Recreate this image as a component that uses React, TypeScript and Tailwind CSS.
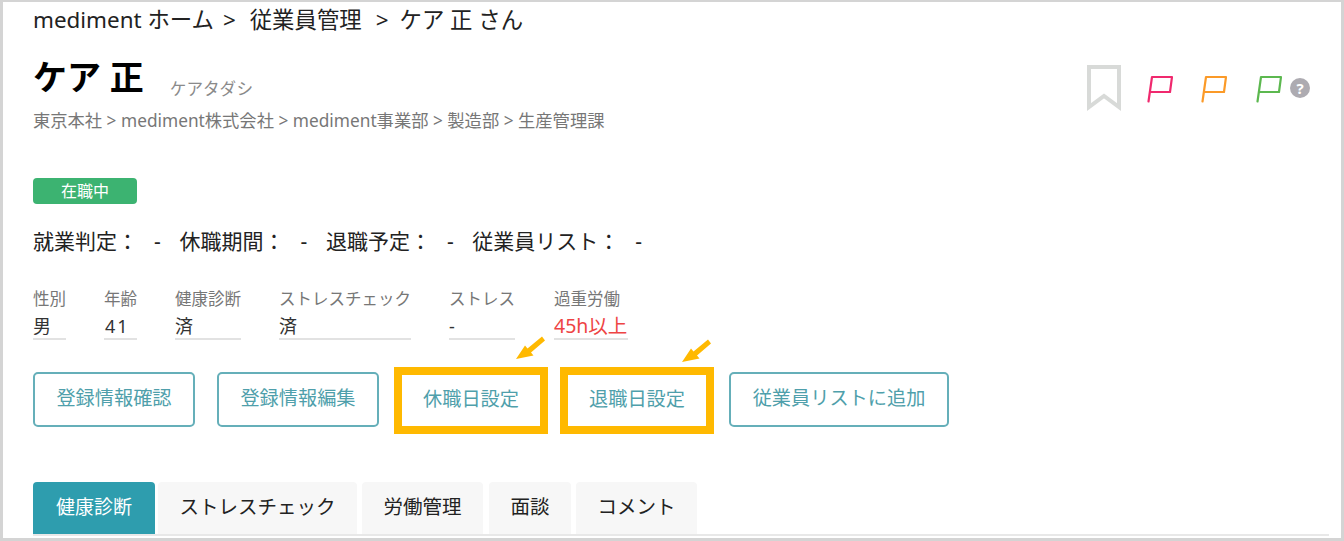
const infoItems = [
  { label: "性別", value: "男", width: "w-[33px]", gap: "mr-[38px]" },
  { label: "年齢", value: "41", width: "w-[33px]", gap: "mr-[38px]", spaced: true },
  { label: "健康診断", value: "済", width: "w-[66px]", gap: "mr-[38px]" },
  { label: "ストレスチェック", value: "済", width: "w-[132px]", gap: "mr-[38px]" },
  { label: "ストレス", value: "-", width: "w-[66px]", gap: "mr-[39px]" },
  { label: "過重労働", value: "45h以上", width: "w-[74px]", gap: "", red: true },
];

const tabs = [
  { label: "ストレスチェック", box: "w-[199px] mr-[5px]" },
  { label: "労働管理", box: "w-[121px] mr-[6px]" },
  { label: "面談", box: "w-[82px] mr-[5px]" },
  { label: "コメント", box: "w-[121px]" },
];

const statusItems = ["就業判定：", "休職期間：", "退職予定：", "従業員リスト："];

function Flag({ color }: { color: string }) {
  return (
    <svg width="26" height="28" viewBox="0 0 26 28" fill="none" stroke={color} strokeWidth="2.2" strokeLinecap="round" strokeLinejoin="round">
      <path d="M1.5 26.5 L5 2 H25 L23 17 H3.5" />
    </svg>
  );
}

function Arrow() {
  return (
    <svg width="30" height="24" viewBox="0 0 30 24" fill="#ffb900">
      <path d="M0 23 L9 9.5 L11.5 12.5 L26 0.5 L29 4.5 L15 16.5 L17.5 19.5 Z" />
    </svg>
  );
}

const btn = "h-[55px] pb-[2px] flex items-center justify-center rounded-[5px] border-2 border-[#65afb9] bg-white text-[19.2px] text-[#4f9fab]";
const highlight = "h-[67px] mt-[2px] pb-[2px] flex items-center justify-center border-[8px] border-[#ffb900] bg-white text-[19.2px] text-[#4f9fab]";

export default function App() {
  return (
    <div className="w-[1344px] h-[541px] overflow-hidden border-x-[3px] border-t-[2px] border-b-[3px] border-[#d4d4d4] bg-white font-['Noto_Sans','Noto_Sans_CJK_JP',sans-serif] pl-[30px] pr-[30px] box-border">
      <div className="h-[36px] flex items-center text-[22.4px] leading-none text-[#222222] whitespace-nowrap">
        <span>mediment ホーム</span>
        <span className="ml-[9px]">&gt;</span>
        <span className="ml-[14px]">従業員管理</span>
        <span className="ml-[14px]">&gt;</span>
        <span className="ml-[11px]">ケア 正 さん</span>
      </div>

      <div className="flex justify-between">
        <div>
          <div className="flex items-end h-[54px] mt-[12px]">
            <span className="text-[34px] font-bold leading-[54px] text-black">ケア 正</span>
            <span className="ml-[26px] mb-[5px] text-[16.6px] leading-[20px] text-[#8a8a8a]">ケアタダシ</span>
          </div>
          <div className="mt-[6px] text-[17.3px] leading-[22px] text-[#777777] whitespace-nowrap">東京本社 &gt; mediment株式会社 &gt; mediment事業部 &gt; 製造部 &gt; 生産管理課</div>
        </div>
        <div className="flex items-start pt-[27px] pr-[1px]">
          <svg width="34" height="46" viewBox="0 0 34 46" fill="none" stroke="#d8dad8" strokeWidth="4">
            <path d="M2 2 H32 V42 L17 31 L2 42 Z" />
          </svg>
          <div className="ml-[26px] mt-[10px]"><Flag color="#f0296e" /></div>
          <div className="ml-[28px] mt-[10px]"><Flag color="#fb9a28" /></div>
          <div className="ml-[29px] mt-[10px]"><Flag color="#5cb84f" /></div>
          <div className="ml-[8px] mt-[13px] w-[20px] h-[20px] rounded-full bg-[#adabb1] flex items-center justify-center text-white text-[15px] font-bold leading-none">?</div>
        </div>
      </div>

      <div className="mt-[46px] w-[104px] h-[26px] rounded-[4px] bg-[#3cb371] flex items-center justify-center text-[16px] text-white">在職中</div>

      <div className="mt-[23px] flex items-center h-[28px] text-[21px] leading-none text-[#222222] whitespace-nowrap">
        {statusItems.map((item) => (
          <span key={item} className="mr-[18.7px]">{item}<span className="ml-[16px]">-</span></span>
        ))}
      </div>

      <div className="mt-[32px] flex">
        {infoItems.map((item) => (
          <div key={item.label} className={`${item.width} ${item.gap}`}>
            <div className="text-[16.5px] leading-[24px] whitespace-nowrap text-[#777777]">{item.label}</div>
            <div className={`h-[29px] pt-[2px] border-b-2 border-[#e2e2e2] leading-[26px] whitespace-nowrap ${item.red ? "text-[19.5px] text-[#ee4444]" : "text-[18px] text-[#333333]"} ${item.spaced ? "tracking-[2px] pl-[1px]" : ""}`}>{item.value}</div>
          </div>
        ))}
      </div>

      <div className="relative mt-[32px] h-[55px] flex items-center">
        <div className={`${btn} w-[162px] mr-[22px]`}>登録情報確認</div>
        <div className={`${btn} w-[162px] mr-[15px]`}>登録情報編集</div>
        <div className={`${highlight} w-[154px] mr-[12px]`}>休職日設定</div>
        <div className={`${highlight} w-[154px] mr-[15px]`}>退職日設定</div>
        <div className={`${btn} w-[220px]`}>従業員リストに追加</div>
        <div className="absolute left-[483px] top-[-36px]"><Arrow /></div>
        <div className="absolute left-[649px] top-[-33px]"><Arrow /></div>
      </div>

      <div className="mt-[55px] flex h-[52px]">
        <div className="w-[122px] mr-[3px] pb-[2px] rounded-t-[4px] bg-[#2e9dae] flex items-center justify-center text-[19px] text-white">健康診断</div>
        {tabs.map((tab) => (
          <div key={tab.label} className={`${tab.box} pb-[2px] bg-[#f7f7f7] rounded-t-[4px] flex items-center justify-center text-[19.5px] text-[#222222]`}>{tab.label}</div>
        ))}
      </div>
      <div className="h-[2px] -mr-[18px] bg-[#e8e8e8]" />
    </div>
  );
}
